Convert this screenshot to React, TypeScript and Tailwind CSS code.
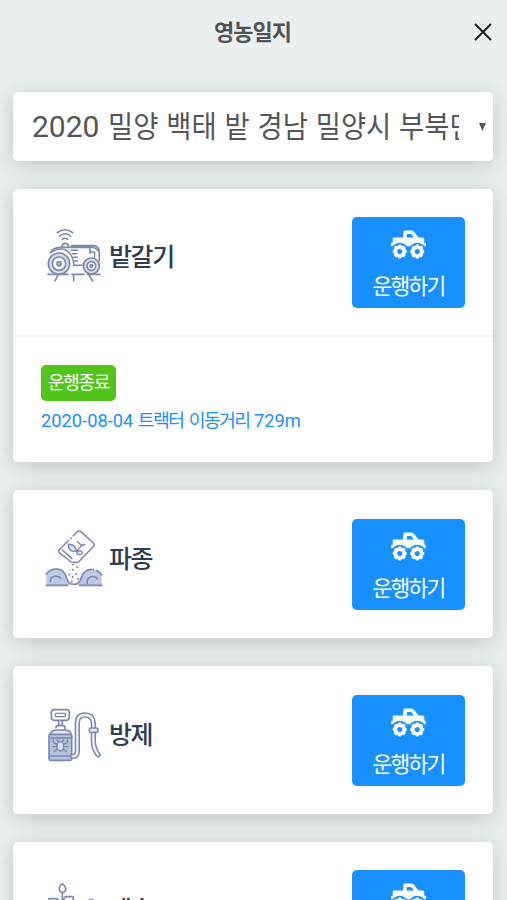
import React from 'react';
import { FaTruckMonster } from 'react-icons/fa';

const iconProps = {
  className: 'w-[58px] h-[58px] shrink-0',
  fill: 'none',
  stroke: '#7b87ad',
  strokeWidth: 5,
  strokeLinecap: 'round' as const,
  strokeLinejoin: 'round' as const,
};

const TractorIcon = () => (
  <svg {...iconProps} viewBox="15 24 174 174">
    {/* signal */}
    <path d="M52 38 Q75 20 98 38 M58 48 Q75 34 92 48 M67 58 Q75 52 83 58" strokeWidth="4.5" />
    {/* body */}
    <path d="M32 98 Q38 83 60 82 H150 V100 M66 81 Q67 70 76 70 Q85 70 86 81 M95 77 H160 Q178 78 178 98 V122 M150 82 Q165 80 178 96" />
    <path d="M32 98 Q62 80 80 92 Q94 100 100 122 L101 136 H126 M94 91 H112 M97 101 H110 M101 112 H112 M102 123 H112" strokeWidth="4.5" />
    <path d="M152 96 H164 V112" strokeWidth="4" />
    {/* wheels */}
    <circle cx="57" cy="131" r="32" fill="#d5ddee" />
    <circle cx="57" cy="131" r="20" fill="#fff" />
    <circle cx="57" cy="131" r="6" fill="#b9c5df" />
    <circle cx="154" cy="138" r="24" fill="#d5ddee" />
    <circle cx="154" cy="138" r="13" fill="#fff" />
    <circle cx="154" cy="138" r="4" fill="#b9c5df" />
    {/* plough */}
    <path d="M24 163 H84 M96 163 H132 M142 163 H180 M54 165 L45 183 M101 165 V183 M147 165 L158 183" />
  </svg>
);

const SeedIcon = () => (
  <svg {...iconProps} viewBox="15 24 174 174">
    <path d="M19 159 Q30 143 52 144 Q72 146 78 166 Q84 190 101 190 Q119 190 124 169 Q132 145 155 145 Q176 146 185 160 V192 H19 Z" fill="#bdcae4" stroke="none" />
    <path d="M19 159 Q30 143 52 144 Q72 146 78 166 Q84 190 101 190 Q119 190 124 169 Q132 145 155 145 M170 149 Q182 153 185 162 M19 193 H83 M119 193 H185" />
    <path d="M31 182 Q31 169 45 166 Q57 164 62 172 M142 187 Q139 171 153 167 Q168 165 172 174" strokeWidth="4.5" />
    {/* seed packet */}
    <path d="M99 45 L111 33 Q116 28 123 32 L160 66 Q165 71 161 76 L116 122 Q113 126 108 124 L93 123 L57 94 Q54 90 57 87 L86 58" strokeWidth="4.5" />
    <path d="M67 87 L96 112 M92 51 L94 52" strokeWidth="4.5" />
    <path d="M109 91 Q84 93 85 70 Q105 68 109 91 Q111 105 126 99 Q130 85 109 91 L127 71 M112 62 L126 75 L135 70" strokeWidth="4" fill="#d7dff0" />
    {/* falling seeds */}
    <path d="M99 130 V131 M111 138 V139 M98 146 V147 M88 160 V161 M108 158 V159 M98 167 V168 M114 173 V174 M95 181 V182 M160 145 V146" strokeWidth="5.5" />
  </svg>
);

const SprayerIcon = () => (
  <svg {...iconProps} viewBox="15 12 174 174">
    {/* handle */}
    <rect x="34" y="26" width="54" height="32" rx="9" />
    <rect x="46" y="37" width="30" height="10" rx="3" strokeWidth="4" />
    <path d="M56 59 V74 M67 59 V74 M48 80 Q48 74 54 74 H69 Q75 74 75 80 V86" />
    {/* tank */}
    <path d="M29 110 Q29 88 47 87 H77 Q95 88 95 110 Z" fill="#e1e6f2" />
    <rect x="27" y="100" width="68" height="78" rx="4" fill="#b7c2dc" />
    <path d="M29 111 H93 M29 165 H93" strokeWidth="4" />
    {/* bug */}
    <ellipse cx="61" cy="136" rx="10" ry="14" fill="#dce3f1" strokeWidth="4" />
    <path d="M51 130 L40 124 V117 M71 130 L82 124 V117 M50 137 H38 M72 137 H84 M52 144 L42 152 M70 144 L80 152 M56 123 L51 116 M66 123 L71 116" strokeWidth="4" />
    {/* hose */}
    <path d="M98 166 Q112 166 112 149 V66 Q112 42 135 42 Q158 42 160 66 V118 Q160 144 174 161" strokeWidth="16" />
    <path d="M98 166 Q112 166 112 149 V66 Q112 42 135 42 Q158 42 160 66 V118 Q160 144 174 161" stroke="#edf0f8" strokeWidth="7" />
    <rect x="148" y="81" width="26" height="13" rx="5" fill="#e4e8f3" />
  </svg>
);

const WeedIcon = () => (
  <svg {...iconProps} viewBox="45 150 174 174">
    <path d="M97 158 Q87 165 88 176 Q90 184 97 185 Q105 184 107 176 Q107 165 97 158 Z" />
    <path d="M97 186 V270 M97 228 Q100 197 108 197 H129 Q136 221 97 228 M97 236 Q88 204 80 203 H57 Q54 229 97 236" />
    <path d="M177 208 Q183 203 191 208 L206 240 M177 208 L140 286 M70 290 H200" />
  </svg>
);

interface Log {
  status: string;
  detail: string;
}

interface Task {
  name: string;
  icon: React.ReactNode;
  log?: Log;
}

const tasks: Task[] = [
  {
    name: '밭갈기',
    icon: <TractorIcon />,
    log: { status: '운행종료', detail: '트랙터 이동거리' },
  },
  { name: '파종', icon: <SeedIcon /> },
  { name: '방제', icon: <SprayerIcon /> },
  { name: '제초', icon: <WeedIcon /> },
];

const TaskCard = ({ name, icon, log }: Task) => (
  <section className="rounded-[5px] bg-white shadow-[0_4px_22px_rgba(0,0,0,0.18)]">
    <div className="flex h-[147.7px] items-center justify-between pl-8 pr-7">
      <div className="flex items-center gap-[6px] pb-[12px]">
        {icon}
        <h2 className="pt-[2px] text-[25px] leading-none font-medium tracking-[-1.4px] text-[#2c3e50]">{name}</h2>
      </div>
      <button className="flex h-[91px] w-[113px] flex-col items-center rounded-[5px] bg-[#1890ff] pt-[10px] text-white">
        <FaTruckMonster className="h-[35px] w-[35px]" />
        <span className="mt-[10px] text-[21.5px] leading-[30px] tracking-[-1.8px]">운행하기</span>
      </button>
    </div>
    {log && (
      <div className="-mt-[1.5px] h-[127.3px] border-t-2 border-[#f5f5f5] px-7 pt-[27.5px]">
        <span className="flex h-9 w-[75px] items-center justify-center rounded-[5px] bg-[#52c41a] text-[18px] tracking-[-1.3px] text-white">
          {log.status}
        </span>
        <p className="mt-[7.5px] text-[18.3px] leading-[26px] whitespace-nowrap text-[#1890ff]">
          2020-08-04 <span className="tracking-[-1.65px] [word-spacing:2.5px]">{log.detail}</span> 729m
        </p>
      </div>
    )}
  </section>
);

const App = () => {
  return (
    <div className="h-[900px] w-[507px] overflow-hidden bg-[#eaeff0] font-[Roboto,'Noto_Sans_CJK_KR',sans-serif]">
      <header className="grid h-16 grid-cols-[1fr_auto_1fr] items-center pr-[15px] pl-[13px]">
        <h1 className="col-start-2 text-[22px] font-bold tracking-[-1px] text-[#505354]">영농일지</h1>
        <button aria-label="닫기" className="justify-self-end">
          <svg className="h-[18px] w-[18px]" viewBox="0 0 18 18" stroke="#1c1c1c" strokeWidth="2">
            <path d="M1 1 L17 17 M17 1 L1 17" />
          </svg>
        </button>
      </header>

      <main className="flex flex-col gap-7 pt-7 pr-[14px] pl-[13px]">
        <div className="flex h-[69px] items-center justify-between rounded-[5px] bg-white pr-[7px] pl-[19px] shadow-[0_4px_22px_rgba(0,0,0,0.18)]">
          <div className="flex w-[427px] gap-[9px] overflow-hidden text-[30px] leading-[44px] whitespace-nowrap text-[#555]">
            <span>2020</span>
            <span className="origin-left scale-x-[0.912] [word-spacing:1.2px]">밀양 백태 밭 경남 밀양시 부북면</span>
          </div>
          <svg className="h-2 w-[7px]" viewBox="0 0 7 8" fill="#555">
            <path d="M0 0 H7 L3.5 8 Z" />
          </svg>
        </div>

        {tasks.map((task) => (
          <TaskCard key={task.name} {...task} />
        ))}
      </main>
    </div>
  );
};

export default App;
